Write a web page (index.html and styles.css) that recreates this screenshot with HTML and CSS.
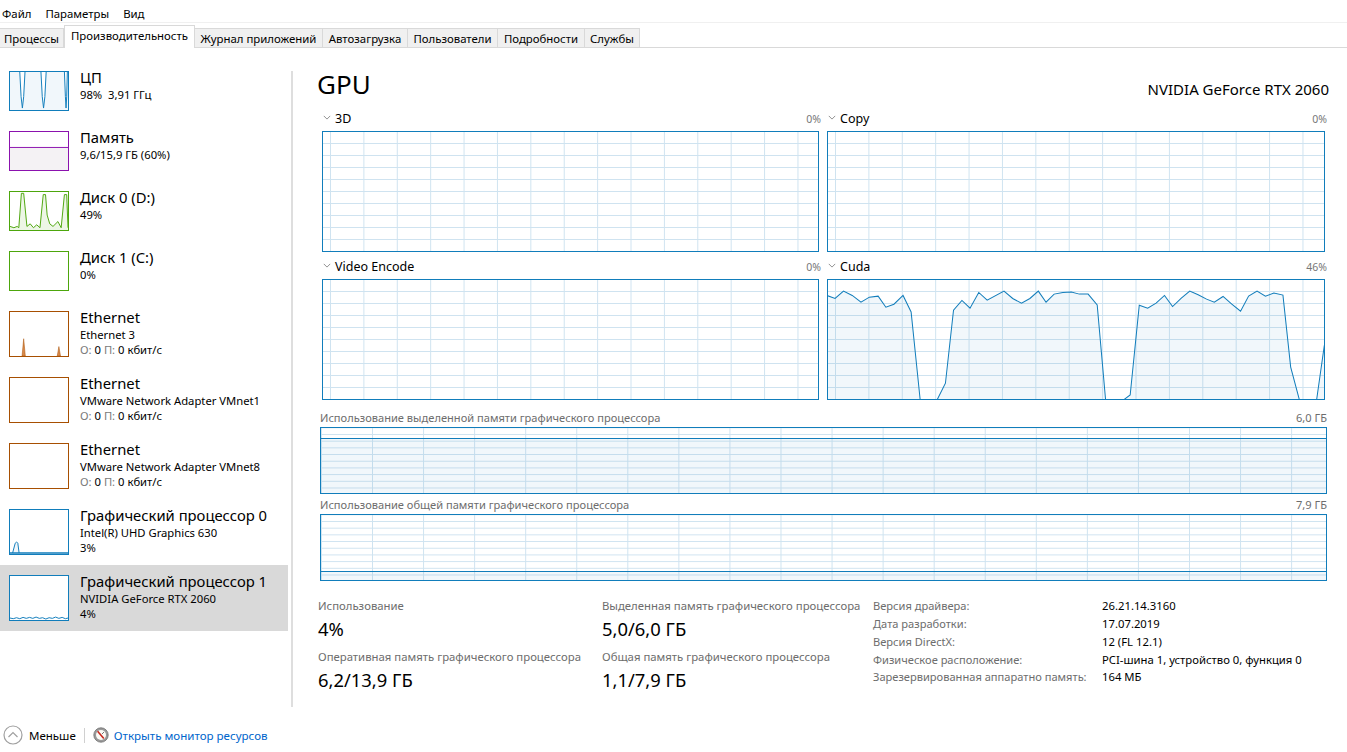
FILE: index.html

```html
<!DOCTYPE html>
<html lang="ru">
<head>
    <meta charset="UTF-8">
    <title>Диспетчер задач</title>
    <link rel="stylesheet" href="styles.css">
</head>
<body>

    <!-- Menu -->
    <div class="menu">
        <span class="menu-item">Файл</span>
        <span class="menu-item">Параметры</span>
        <span class="menu-item">Вид</span>
    </div>

    <!-- Tabs -->
    <div class="tabs">
        <span class="tab tab-first">Процессы</span>
        <span class="tab tab-active">Производительность</span>
        <span class="tab tab-journal">Журнал приложений</span>
        <span class="tab tab-auto">Автозагрузка</span>
        <span class="tab tab-users">Пользователи</span>
        <span class="tab tab-details">Подробности</span>
        <span class="tab tab-services">Службы</span>
    </div>

    <div class="perf">
        <!-- Device list -->
        <div class="sidebar">
            <div class="device">
                <svg class="thumb thumb-blue" viewBox="28 214 178 117" preserveAspectRatio="none">
                    <polygon class="fill-blue" points="28,331 28,214 58,214 62,290 66,325 70,290 74,214 123,214 127,290 131,325 135,290 139,214 195,214 198,290 200,325 202,290 204,214 206,214 206,331"/>
                    <polyline class="line-blue" points="58,214 62,290 66,325 70,290 74,214"/>
                    <polyline class="line-blue" points="123,214 127,290 131,325 135,290 139,214"/>
                    <polyline class="line-blue" points="195,214 198,290 200,325 202,290 204,214"/>
                </svg>
                <div class="device-text">
                    <div class="device-name">ЦП</div>
                    <div class="device-sub">98%&nbsp; 3,91 ГГц</div>
                </div>
            </div>
            <div class="device">
                <svg class="thumb thumb-purple" viewBox="28 394 178 118" preserveAspectRatio="none">
                    <rect x="28" y="442" width="178" height="70" fill="#f4f2f4"/>
                    <line x1="28" y1="442" x2="206" y2="442" stroke="#8b12ae" stroke-width="3"/>
                </svg>
                <div class="device-text">
                    <div class="device-name">Память</div>
                    <div class="device-sub">9,6/15,9 ГБ (60%)</div>
                </div>
            </div>
            <div class="device">
                <svg class="thumb thumb-green" viewBox="28 574 178 117" preserveAspectRatio="none">
                    <polygon class="fill-green" points="28,691 28,680 40,684 50,680 55,684 63,578 70,578 80,680 90,672 100,684 110,675 120,684 130,582 137,582 142,645 150,672 160,680 175,665 185,684 195,582 202,582 206,684 206,691"/>
                    <polyline class="line-green" points="28,680 40,684 50,680 55,684 63,578 70,578 80,680 90,672 100,684 110,675 120,684 130,582 137,582 142,645 150,672 160,680 175,665 185,684 195,582 202,582 206,684"/>
                </svg>
                <div class="device-text">
                    <div class="device-name">Диск 0 (D:)</div>
                    <div class="device-sub">49%</div>
                </div>
            </div>
            <div class="device">
                <svg class="thumb thumb-green" viewBox="0 0 178 117"></svg>
                <div class="device-text">
                    <div class="device-name">Диск 1 (C:)</div>
                    <div class="device-sub">0%</div>
                </div>
            </div>
            <div class="device device-net">
                <svg class="thumb thumb-net" viewBox="28 214 178 135" preserveAspectRatio="none">
                    <polygon fill="#d98a4c" stroke="#a74f01" stroke-width="1.5" points="65,349 70,296 75,349"/>
                    <polygon fill="#d98a4c" stroke="#a74f01" stroke-width="1.5" points="173,349 178,320 183,349"/>
                </svg>
                <div class="device-text">
                    <div class="device-name">Ethernet</div>
                    <div class="device-sub">Ethernet 3</div>
                    <div class="device-sub"><span class="dim">О:</span> 0 <span class="dim">П:</span> 0 кбит/с</div>
                </div>
            </div>
            <div class="device device-net">
                <svg class="thumb thumb-net" viewBox="0 0 178 135"></svg>
                <div class="device-text">
                    <div class="device-name">Ethernet</div>
                    <div class="device-sub">VMware Network Adapter VMnet1</div>
                    <div class="device-sub"><span class="dim">О:</span> 0 <span class="dim">П:</span> 0 кбит/с</div>
                </div>
            </div>
            <div class="device device-net">
                <svg class="thumb thumb-net" viewBox="0 0 178 135"></svg>
                <div class="device-text">
                    <div class="device-name">Ethernet</div>
                    <div class="device-sub">VMware Network Adapter VMnet8</div>
                    <div class="device-sub"><span class="dim">О:</span> 0 <span class="dim">П:</span> 0 кбит/с</div>
                </div>
            </div>
            <div class="device device-net">
                <svg class="thumb thumb-blue" viewBox="28 88 178 135" preserveAspectRatio="none">
                    <polygon class="fill-blue" points="36,222 44,190 48,186 52,190 56,222"/>
                    <polyline class="line-blue" points="36,220 44,190 48,186 52,190 56,220"/>
                    <line x1="28" y1="220" x2="206" y2="220" stroke="#117dbb" stroke-width="5"/>
                </svg>
                <div class="device-text">
                    <div class="device-name">Графический процессор 0</div>
                    <div class="device-sub">Intel(R) UHD Graphics 630</div>
                    <div class="device-sub">3%</div>
                </div>
            </div>
            <div class="device device-net device-active">
                <svg class="thumb thumb-blue" viewBox="28 286 178 135" preserveAspectRatio="none">
                    <polyline class="line-blue" points="28,415 38,417 48,414 58,417 68,413 78,416 88,413 98,416 108,412 118,416 128,414 138,418 148,414 158,416 168,412 178,416 188,413 198,417 206,415"/>
                </svg>
                <div class="device-text">
                    <div class="device-name">Графический процессор 1</div>
                    <div class="device-sub">NVIDIA GeForce RTX 2060</div>
                    <div class="device-sub">4%</div>
                </div>
            </div>
        </div>

        <!-- GPU details -->
        <div class="main">
            <div class="main-head">
                <h1>GPU</h1>
                <div class="gpu-model">NVIDIA GeForce RTX 2060</div>
            </div>

            <div class="engines">
                <div class="engine">
                    <div class="engine-head">
                        <span class="engine-name"><svg class="chevron" viewBox="0 0 10 6"><polyline points="1,1 5,5 9,1"/></svg>3D</span>
                        <span class="dim-small">0%</span>
                    </div>
                    <div class="graph"></div>
                </div>
                <div class="engine">
                    <div class="engine-head">
                        <span class="engine-name"><svg class="chevron" viewBox="0 0 10 6"><polyline points="1,1 5,5 9,1"/></svg>Copy</span>
                        <span class="dim-small">0%</span>
                    </div>
                    <div class="graph"></div>
                </div>
                <div class="engine">
                    <div class="engine-head">
                        <span class="engine-name"><svg class="chevron" viewBox="0 0 10 6"><polyline points="1,1 5,5 9,1"/></svg>Video Encode</span>
                        <span class="dim-small">0%</span>
                    </div>
                    <div class="graph"></div>
                </div>
                <div class="engine">
                    <div class="engine-head">
                        <span class="engine-name"><svg class="chevron" viewBox="0 0 10 6"><polyline points="1,1 5,5 9,1"/></svg>Cuda</span>
                        <span class="dim-small">46%</span>
                    </div>
                    <div class="graph">
                        <svg class="graph-line" viewBox="25 76 1474 354" preserveAspectRatio="none">
                            <polygon class="fill-blue" points="22,433 22,122 46,131 71,109 97,122 123,142 148,127 174,124 197,157 221,148 248,122 272,171 299,433 349,433 374,383 398,166 423,137 447,160 473,113 498,136 548,109 574,131 600,145 625,131 650,109 673,142 697,118 723,113 748,112 772,118 798,118 825,150 850,433 903,433 923,418 950,151 975,160 1000,145 1025,122 1049,155 1075,130 1100,109 1125,120 1150,133 1173,142 1199,125 1225,148 1251,169 1275,124 1300,109 1325,124 1350,115 1377,121 1400,335 1426,433 1477,433 1500,270 1500,433"/>
                            <polyline class="line-blue" points="22,122 46,131 71,109 97,122 123,142 148,127 174,124 197,157 221,148 248,122 272,171 299,433 349,433 374,383 398,166 423,137 447,160 473,113 498,136 548,109 574,131 600,145 625,131 650,109 673,142 697,118 723,113 748,112 772,118 798,118 825,150 850,433 903,433 923,418 950,151 975,160 1000,145 1025,122 1049,155 1075,130 1100,109 1125,120 1150,133 1173,142 1199,125 1225,148 1251,169 1275,124 1300,109 1325,124 1350,115 1377,121 1400,335 1426,433 1477,433 1500,270"/>
                        </svg>
                    </div>
                </div>
            </div>

            <div class="memory">
                <div class="memory-head">
                    <span>Использование выделенной памяти графического процессора</span>
                    <span>6,0 ГБ</span>
                </div>
                <div class="mem-graph"><div class="mem-used mem-dedicated"></div></div>
                <div class="memory-head">
                    <span>Использование общей памяти графического процессора</span>
                    <span>7,9 ГБ</span>
                </div>
                <div class="mem-graph"><div class="mem-used mem-shared"></div></div>
            </div>

            <div class="stats">
                <div class="stat-col stat-col-1">
                    <div class="stat-label">Использование</div>
                    <div class="stat-value">4%</div>
                    <div class="stat-label">Оперативная память графического процессора</div>
                    <div class="stat-value">6,2/13,9 ГБ</div>
                </div>
                <div class="stat-col stat-col-2">
                    <div class="stat-label">Выделенная память графического процессора</div>
                    <div class="stat-value">5,0/6,0 ГБ</div>
                    <div class="stat-label">Общая память графического процессора</div>
                    <div class="stat-value">1,1/7,9 ГБ</div>
                </div>
                <div class="info">
                    <span class="info-key">Версия драйвера:</span><span>26.21.14.3160</span>
                    <span class="info-key">Дата разработки:</span><span>17.07.2019</span>
                    <span class="info-key">Версия DirectX:</span><span>12 (FL 12.1)</span>
                    <span class="info-key">Физическое расположение:</span><span>PCI-шина 1, устройство 0, функция 0</span>
                    <span class="info-key">Зарезервированная аппаратно память:</span><span>164 МБ</span>
                </div>
            </div>
        </div>
    </div>

    <!-- Footer -->
    <div class="footer">
        <svg class="less-icon" viewBox="0 0 20 20">
            <circle cx="10" cy="10" r="9" fill="#fff" stroke="#a0a0a0" stroke-width="1.2"/>
            <polyline points="5.5,12 10,7.5 14.5,12" fill="none" stroke="#a0a0a0" stroke-width="1.2"/>
        </svg>
        <span class="less-text">Меньше</span>
        <span class="footer-sep"></span>
        <svg class="monitor-icon" viewBox="0 0 16 16">
            <circle cx="8" cy="8" r="7.2" fill="#9a9a9a" stroke="#6f6f6f" stroke-width="0.8"/>
            <circle cx="8" cy="8" r="5" fill="#fbfbf6"/>
            <line x1="4.6" y1="4.2" x2="10.8" y2="11.6" stroke="#c8281e" stroke-width="1.6"/>
            <line x1="11" y1="5" x2="9" y2="7" stroke="#555" stroke-width="0.8"/>
        </svg>
        <span class="monitor-link">Открыть монитор ресурсов</span>
    </div>

</body>
</html>
```

FILE: styles.css

```css
/* General Styles */
html, body {
    margin: 0;
    height: 100%;
}

body {
    width: 1347px;
    height: 752px;
    overflow: hidden;
    background: #fff;
    color: #000;
    font-family: "Noto Sans", "Open Sans", sans-serif;
    font-size: 11.4px;
    display: flex;
    flex-direction: column;
}

/* Menu */
.menu {
    height: 23px;
    display: flex;
    align-items: center;
    padding: 5px 0 0 2px;
    box-sizing: border-box;
    border-bottom: 1px solid #f0f0f0;
    gap: 14px;
}

/* Tabs */
.tabs {
    height: 25px;
    display: flex;
    align-items: flex-end;
    border-bottom: 1px solid #d9d9d9;
    box-sizing: border-box;
}

.tab {
    height: 19px;
    line-height: 19px;
    text-align: center;
    box-sizing: border-box;
    background: #f0f0f0;
    border: 1px solid #d9d9d9;
    border-bottom: none;
    border-left: none;
}

.tab-first { width: 64px; }
.tab-journal { width: 128px; }
.tab-auto { width: 85px; }
.tab-users { width: 90px; }
.tab-details { width: 87px; }
.tab-services { width: 55px; }

.tab-active {
    width: 131px;
    height: 23px;
    line-height: 20px;
    background: #fff;
    margin-bottom: -1px;
    border-left: 1px solid #d9d9d9;
}

/* Layout */
.perf {
    display: flex;
    padding-top: 13px;
    height: 659px;
    box-sizing: border-box;
}

.sidebar {
    width: 288px;
    flex-shrink: 0;
}

.device {
    height: 60px;
    box-sizing: border-box;
    padding: 10px 0 0 9px;
    display: flex;
}

.device-net { height: 66px; }
.device-active { background: #d9d9d9; }

.thumb {
    width: 60px;
    height: 40px;
    box-sizing: border-box;
    border: 1px solid;
    background: #fff;
    flex-shrink: 0;
}

.device-net .thumb { height: 46px; }

.thumb-blue { border-color: #117dbb; }
.thumb-purple { border-color: #8b12ae; }
.thumb-green { border-color: #4da60c; }
.thumb-net { border-color: #a74f01; }

.fill-blue { fill: rgba(17, 125, 187, 0.06); }
.fill-green { fill: rgba(77, 166, 12, 0.1); }
.line-blue { fill: none; stroke: #117dbb; stroke-width: 3; }
.line-green { fill: none; stroke: #4da60c; stroke-width: 3; }

.device-text {
    margin-left: 11px;
    margin-top: -3px;
}

.device-name {
    font-size: 14.8px;
    line-height: 19px;
}

.device-sub {
    font-size: 11.25px;
    line-height: 15px;
}

.dim { color: #7a7a7a; }

/* GPU details */
.main {
    margin: 10px 0 0 3px;
    height: 636px;
    width: 1038px;
    box-sizing: border-box;
    border-left: 2px solid #dedede;
    padding-left: 24px;
}

.main-head {
    display: flex;
    justify-content: space-between;
    align-items: flex-end;
    height: 39px;
}

h1 {
    font-size: 26px;
    font-weight: 400;
    line-height: 30px;
    margin: 0 0 11px;
}

.gpu-model {
    font-size: 15px;
    line-height: 20px;
    margin-bottom: 11px;
}

.engines {
    display: grid;
    grid-template-columns: 497px 498px;
    column-gap: 8px;
    row-gap: 6px;
    margin-left: 5px;
    width: 1008px;
}

.engine-head {
    height: 16px;
    padding-top: 1px;
    box-sizing: border-box;
    margin-bottom: 5px;
    display: flex;
    justify-content: space-between;
    align-items: center;
    margin-right: -2px;
}

.engine-name {
    font-size: 12.5px;
    display: flex;
    align-items: center;
}

.chevron {
    width: 8px;
    height: 5px;
    margin: 0 4px 2px 1px;
    fill: none;
    stroke: #777;
    stroke-width: 1;
}

.dim-small {
    font-size: 10.5px;
    color: #777;
}

.graph {
    height: 121px;
    box-sizing: border-box;
    border: 1px solid #117dbb;
    position: relative;
    background-image:
        linear-gradient(#cfe3f0 1px, transparent 1px),
        linear-gradient(90deg, #cfe3f0 1px, transparent 1px);
    background-size: 100% 12px, 33.4px 100%;
    background-position: 0 11px, 7px 0;
}

.graph-line {
    position: absolute;
    left: 0;
    top: 0;
    width: 100%;
    height: 100%;
}

/* Memory graphs */
.memory {
    margin: 10px 0 0 3px;
    width: 1007px;
}

.memory-head {
    height: 16px;
    padding-bottom: 2px;
    box-sizing: border-box;
    margin-bottom: 1px;
    display: flex;
    justify-content: space-between;
    align-items: center;
    font-size: 11.1px;
    color: #6d6d6d;
}

.mem-graph {
    height: 67px;
    margin-bottom: 3px;
    box-sizing: border-box;
    border: 1px solid #117dbb;
    display: flex;
    flex-direction: column;
    justify-content: flex-end;
    background-image:
        linear-gradient(#cfe3f0 1px, transparent 1px),
        linear-gradient(90deg, #cfe3f0 1px, transparent 1px);
    background-size: 100% 6.7px, 51.07px 100%;
    background-position: 0 6px, 51px 0;
}

.mem-used {
    box-sizing: border-box;
    border-top: 1px solid #117dbb;
    background: rgba(17, 125, 187, 0.06);
}

.mem-dedicated { height: 55px; }
.mem-shared { height: 9px; }

/* Stats */
.stats {
    display: flex;
    margin-top: 17px;
    margin-left: 1px;
}

.stat-col-1 { width: 284px; }
.stat-col-2 { width: 271px; }

.stat-label {
    font-size: 11.35px;
    line-height: 16px;
    color: #6d6d6d;
}

.stat-value {
    font-size: 18.4px;
    line-height: 24px;
    margin: 3px 0 8px;
}

.info {
    display: grid;
    grid-template-columns: 229px auto;
    font-size: 11.3px;
    line-height: 17.85px;
    align-content: start;
    margin-top: -1px;
}

.info-key { color: #6d6d6d; font-size: 11.1px; }

/* Footer */
.footer {
    display: flex;
    align-items: center;
    height: 34px;
    padding: 0 0 0 3px;
    margin-top: 11px;
}

.less-icon {
    width: 20px;
    height: 20px;
    margin-right: 6px;
}

.less-text { font-size: 11.5px; }

.footer-sep {
    width: 1px;
    height: 15px;
    background: #d0d0d0;
    margin: 0 8px 0 8px;
}

.monitor-icon {
    width: 16px;
    height: 16px;
    margin-right: 5px;
}

.monitor-link {
    font-size: 11.55px;
    color: #0066cc;
}
```
